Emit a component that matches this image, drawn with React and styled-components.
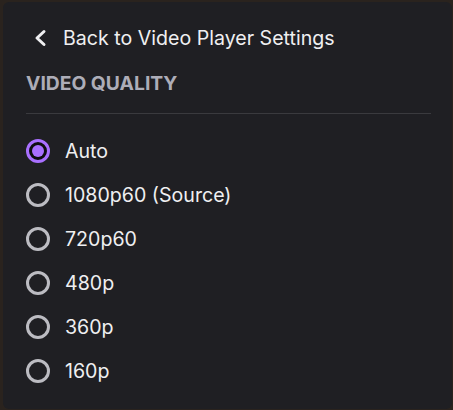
import React, { useState } from "react";
import styled, { createGlobalStyle } from "styled-components";

const Global = createGlobalStyle`
  html, body { margin: 0; padding: 0; }
  body {
    background: #2a231e;
    width: 453px;
    height: 410px;
    overflow: hidden;
    font-family: Inter, "Noto Sans", "Liberation Sans", sans-serif;
  }
`;

const Panel = styled.div`
  margin: 2px 0 0 3px;
  width: 449px;
  height: 407px;
  box-sizing: border-box;
  background: #1f1f23;
  border-radius: 6px;
  padding: 18px 21px 0 23px;
  display: flex;
  flex-direction: column;
`;

const BackButton = styled.button`
  display: flex;
  align-items: center;
  gap: 16px;
  height: 36px;
  padding: 0 0 0 8px;
  margin: 0;
  border: none;
  background: transparent;
  color: #efeff1;
  font-family: inherit;
  font-size: 19.6px;
  cursor: pointer;
  text-align: left;
`;

const Title = styled.div`
  margin-top: 15px;
  height: 24px;
  line-height: 24px;
  font-size: 19.3px;
  font-weight: 700;
  color: #adadb8;
`;

const Divider = styled.div`
  margin-top: 18px;
  height: 1px;
  background: #3a3a3e;
`;

const List = styled.div`
  margin-top: 15px;
  display: flex;
  flex-direction: column;
`;

const Row = styled.label`
  display: flex;
  align-items: center;
  height: 44px;
  gap: 15px;
  cursor: pointer;
  color: #efeff1;
  font-size: 19.6px;
`;

const Radio = styled.span`
  position: relative;
  width: 24px;
  height: 24px;
  box-sizing: border-box;
  border-radius: 50%;
  border: 3px solid ${(p) => (p.$checked ? "#a970ff" : "#bcbcc2")};
  background: ${(p) => (p.$checked ? "#0e0e10" : "transparent")};
  flex-shrink: 0;
  &::after {
    content: "";
    display: ${(p) => (p.$checked ? "block" : "none")};
    position: absolute;
    left: 3px;
    top: 3px;
    width: 12px;
    height: 12px;
    border-radius: 50%;
    background: #a970ff;
  }
`;

const options = ["Auto", "1080p60 (Source)", "720p60", "480p", "360p", "160p"];

export default function App() {
  const [sel, setSel] = useState("Auto");
  return (
    <>
      <Global />
      <Panel>
        <BackButton>
          <svg width="13" height="18" viewBox="0 0 13 18">
            <polyline
              points="10,2.5 3,9 10,15.5"
              fill="none"
              stroke="#efeff1"
              strokeWidth="3"
              strokeLinecap="round"
              strokeLinejoin="round"
            />
          </svg>
          Back to Video Player Settings
        </BackButton>
        <Title>VIDEO QUALITY</Title>
        <Divider />
        <List>
          {options.map((o) => (
            <Row key={o} onClick={() => setSel(o)}>
              <Radio $checked={sel === o} />
              {o}
            </Row>
          ))}
        </List>
      </Panel>
    </>
  );
}
